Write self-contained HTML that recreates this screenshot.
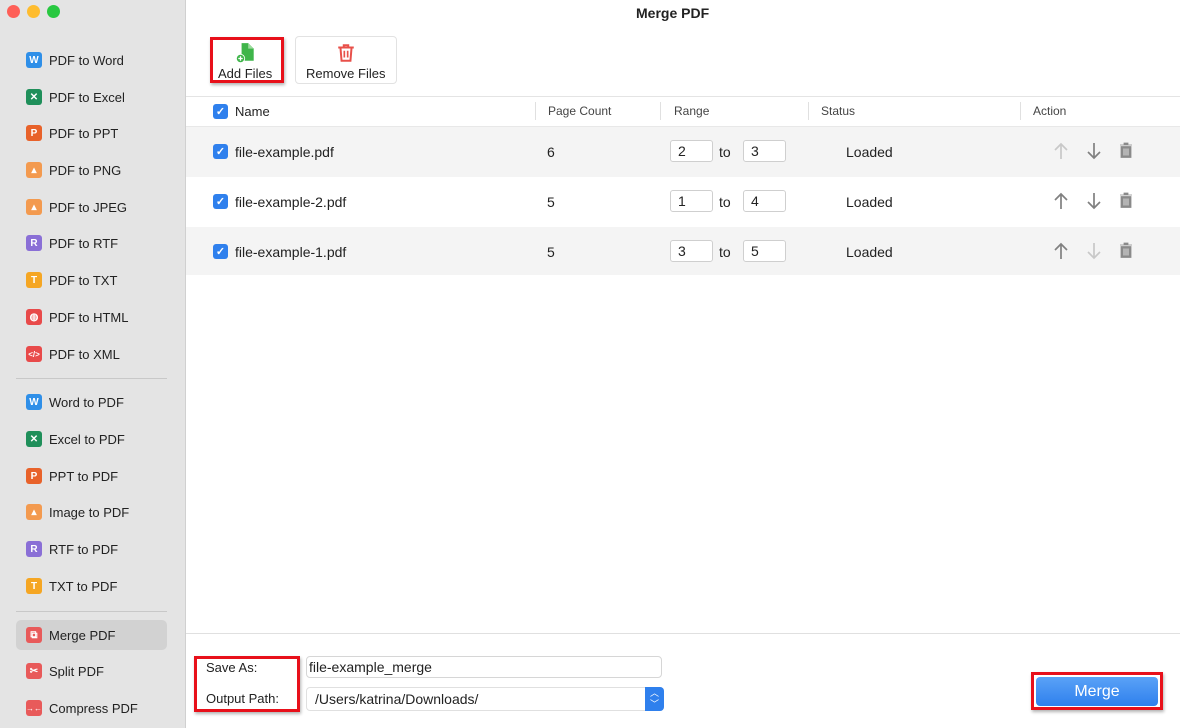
<!DOCTYPE html>
<html><head><meta charset="utf-8"><style>
*{box-sizing:border-box;margin:0;padding:0}
body{width:1180px;height:728px;overflow:hidden;font-family:"Liberation Sans",Helvetica,sans-serif;font-size:13px;color:#222;background:#fff;position:relative}
.sb{position:absolute;left:0;top:0;width:185px;height:728px;background:#e4e4e4}
.dot{position:absolute;top:5px;width:13px;height:13px;border-radius:50%}
.it{position:absolute;left:26px;height:20px;display:flex;align-items:center;font-size:13px;color:#222}
.ic{width:16px;height:16px;border-radius:3px;color:#fff;font-size:10px;font-weight:bold;display:flex;align-items:center;justify-content:center;margin-right:7px}
.sep{position:absolute;left:16px;width:151px;height:1px;background:#c8c8c8}
.a{position:absolute}
.row{position:absolute;left:186px;width:994px;height:50px}
.cb{position:absolute;width:15px;height:15px;border-radius:3px;background:#2f80ed;color:#fff;font-size:11px;display:flex;align-items:center;justify-content:center;font-weight:bold}
.inp{position:absolute;width:43px;height:22px;border:1px solid #cfcfcf;border-radius:3px;background:#fff;font-size:14px;padding-left:7px;line-height:20px}
.t{position:absolute;font-size:14px}
.hd{position:absolute;top:104px;font-size:12px;color:#444}
.vs{position:absolute;top:102px;width:1px;height:18px;background:#e0e0e0}
</style></head><body>
<div class="sb">
<div class="dot" style="left:7px;background:#fe5f57"></div>
<div class="dot" style="left:27px;background:#febc2e"></div>
<div class="dot" style="left:47px;background:#28c840"></div>
<div class="it" style="top:50px"><span class="ic" style="background:#2f8fe8">W</span>PDF to Word</div>
<div class="it" style="top:87px"><span class="ic" style="background:#1f8f5a">✕</span>PDF to Excel</div>
<div class="it" style="top:123px"><span class="ic" style="background:#e8622a">P</span>PDF to PPT</div>
<div class="it" style="top:160px"><span class="ic" style="background:#f39a4f">▴</span>PDF to PNG</div>
<div class="it" style="top:197px"><span class="ic" style="background:#f39a4f">▴</span>PDF to JPEG</div>
<div class="it" style="top:233px"><span class="ic" style="background:#8a6fd6">R</span>PDF to RTF</div>
<div class="it" style="top:270px"><span class="ic" style="background:#f5a623">T</span>PDF to TXT</div>
<div class="it" style="top:307px"><span class="ic" style="background:#e84a4a">◍</span>PDF to HTML</div>
<div class="it" style="top:344px"><span class="ic" style="background:#e84a4a;font-size:8px">&lt;/&gt;</span>PDF to XML</div>
<div class="sep" style="top:378px"></div>
<div class="it" style="top:392px"><span class="ic" style="background:#2f8fe8">W</span>Word to PDF</div>
<div class="it" style="top:429px"><span class="ic" style="background:#1f8f5a">✕</span>Excel to PDF</div>
<div class="it" style="top:466px"><span class="ic" style="background:#e8622a">P</span>PPT to PDF</div>
<div class="it" style="top:502px"><span class="ic" style="background:#f39a4f">▴</span>Image to PDF</div>
<div class="it" style="top:539px"><span class="ic" style="background:#8a6fd6">R</span>RTF to PDF</div>
<div class="it" style="top:576px"><span class="ic" style="background:#f5a623">T</span>TXT to PDF</div>
<div class="sep" style="top:611px"></div>
<div class="a" style="left:16px;top:620px;width:151px;height:30px;background:#d2d2d2;border-radius:5px"></div>
<div class="it" style="top:625px"><span class="ic" style="background:#e85a5a">⧉</span>Merge PDF</div>
<div class="it" style="top:661px"><span class="ic" style="background:#e85a5a">✂</span>Split PDF</div>
<div class="it" style="top:698px"><span class="ic" style="background:#e85a5a;font-size:8px">→←</span>Compress PDF</div>
</div>
<div class="a" style="left:185px;top:0;width:1px;height:728px;background:#d0d0d0"></div>
<div class="a" style="left:636px;top:5px;font-size:14px;font-weight:bold">Merge PDF</div>
<div class="a" style="left:210px;top:37px;width:74px;height:46px;border:3px solid #e8101a;box-shadow:1px 2px 3px rgba(0,0,0,.3)"></div>
<svg class="a" style="left:235px;top:42px" width="22" height="22" viewBox="0 0 20 20"><path d="M6 1h6l5 5v11H6z" fill="#3fb54a"/><path d="M12 1v5h5" fill="#9ddc9f"/><circle cx="5" cy="15" r="4.2" fill="#fff"/><circle cx="5" cy="15" r="3.4" fill="#3fb54a"/><path d="M5 13v4M3 15h4" stroke="#fff" stroke-width="1.2"/></svg>
<div class="a" style="left:218px;top:66px;font-size:13px">Add Files</div>
<div class="a" style="left:295px;top:36px;width:102px;height:48px;border:1px solid #e2e2e2;border-radius:4px"></div>
<svg class="a" style="left:336px;top:43px" width="20" height="20" viewBox="0 0 18 18"><path d="M2 4h14M7 4V2h4v2M4 4l1 12h8l1-12" fill="none" stroke="#e8504a" stroke-width="1.8"/><path d="M7.5 7v6M10.5 7v6" stroke="#e8504a" stroke-width="1.5"/></svg>
<div class="a" style="left:306px;top:66px;font-size:13px">Remove Files</div>
<div class="a" style="left:186px;top:96px;width:994px;height:1px;background:#e4e4e4"></div>
<div class="cb" style="left:213px;top:104px">✓</div>
<div class="hd" style="left:235px;font-size:13px;color:#222">Name</div>
<div class="vs" style="left:535px"></div><div class="hd" style="left:548px">Page Count</div>
<div class="vs" style="left:660px"></div><div class="hd" style="left:674px">Range</div>
<div class="vs" style="left:808px"></div><div class="hd" style="left:821px">Status</div>
<div class="vs" style="left:1020px"></div><div class="hd" style="left:1033px">Action</div>
<div class="a" style="left:186px;top:126px;width:994px;height:1px;background:#e8e8e8"></div>
<div class="row" style="top:127px;background:#f4f4f4"></div>
<div class="row" style="top:177px;background:#fff"></div>
<div class="row" style="top:227px;background:#f4f4f4;height:48px"></div>

<div class="cb" style="left:213px;top:144px">✓</div><div class="t" style="left:235px;top:144px">file-example.pdf</div><div class="t" style="left:547px;top:144px">6</div>
<div class="inp" style="left:670px;top:140px">2</div><div class="t" style="left:719px;top:144px">to</div><div class="inp" style="left:743px;top:140px">3</div><div class="t" style="left:846px;top:144px">Loaded</div>

<div class="cb" style="left:213px;top:194px">✓</div><div class="t" style="left:235px;top:194px">file-example-2.pdf</div><div class="t" style="left:547px;top:194px">5</div>
<div class="inp" style="left:670px;top:190px">1</div><div class="t" style="left:719px;top:194px">to</div><div class="inp" style="left:743px;top:190px">4</div><div class="t" style="left:846px;top:194px">Loaded</div>

<div class="cb" style="left:213px;top:244px">✓</div><div class="t" style="left:235px;top:244px">file-example-1.pdf</div><div class="t" style="left:547px;top:244px">5</div>
<div class="inp" style="left:670px;top:240px">3</div><div class="t" style="left:719px;top:244px">to</div><div class="inp" style="left:743px;top:240px">5</div><div class="t" style="left:846px;top:244px">Loaded</div>

<svg class="a" style="left:1050px;top:140px" width="90" height="125" viewBox="0 0 90 125">
<defs><g id="up"><path d="M11 19V4M5 10l6-6 6 6" fill="none" stroke-width="1.7"/></g><g id="dn"><path d="M11 3v15M5 12l6 6 6-6" fill="none" stroke-width="1.7"/></g>
<g id="tr"><path d="M70 5h12M74 5V3h4v2M71 6.5h10v11h-10z" fill="#8a8a8a" stroke="#8a8a8a" stroke-width=".8"/><path d="M74 8.5v7M76 8.5v7M78 8.5v7" stroke="#f4f4f4" stroke-width=".8"/></g></defs>
<use href="#up" stroke="#c8c8c8"/><use href="#dn" x="33" stroke="#808080"/><use href="#tr"/>
<use href="#up" y="50" stroke="#808080"/><use href="#dn" x="33" y="50" stroke="#808080"/><use href="#tr" y="50"/>
<use href="#up" y="100" stroke="#808080"/><use href="#dn" x="33" y="100" stroke="#c8c8c8"/><use href="#tr" y="100"/>
</svg>
<div class="a" style="left:186px;top:633px;width:994px;height:1px;background:#e0e0e0"></div>
<div class="a" style="left:194px;top:656px;width:106px;height:56px;border:3px solid #e8101a;box-shadow:1px 2px 3px rgba(0,0,0,.3)"></div>
<div class="a" style="left:206px;top:660px;font-size:13px">Save As:</div>
<div class="a" style="left:206px;top:691px;font-size:13px">Output Path:</div>
<div class="a" style="left:306px;top:656px;width:356px;height:22px;border:1px solid #d6d6d6;border-radius:4px;font-size:14px;padding-left:2px;line-height:20px">file-example_merge</div>
<div class="a" style="left:306px;top:687px;width:358px;height:24px;border:1px solid #e0e0e0;border-radius:4px;font-size:14px;padding-left:8px;line-height:22px">/Users/katrina/Downloads/</div>
<div class="a" style="left:645px;top:687px;width:19px;height:24px;background:#2f80ed;border-radius:0 4px 4px 0;color:#fff;font-size:9px;text-align:center;line-height:11px;padding-top:1px">︿<br>﹀</div>
<div class="a" style="left:1031px;top:672px;width:132px;height:38px;border:3px solid #e8101a;box-shadow:1px 2px 3px rgba(0,0,0,.3)"></div>
<div class="a" style="left:1036px;top:677px;width:122px;height:29px;background:linear-gradient(#5aa2f7,#2f80ed);border-radius:4px;color:#fff;font-size:16px;text-align:center;line-height:29px">Merge</div>
</body></html>
